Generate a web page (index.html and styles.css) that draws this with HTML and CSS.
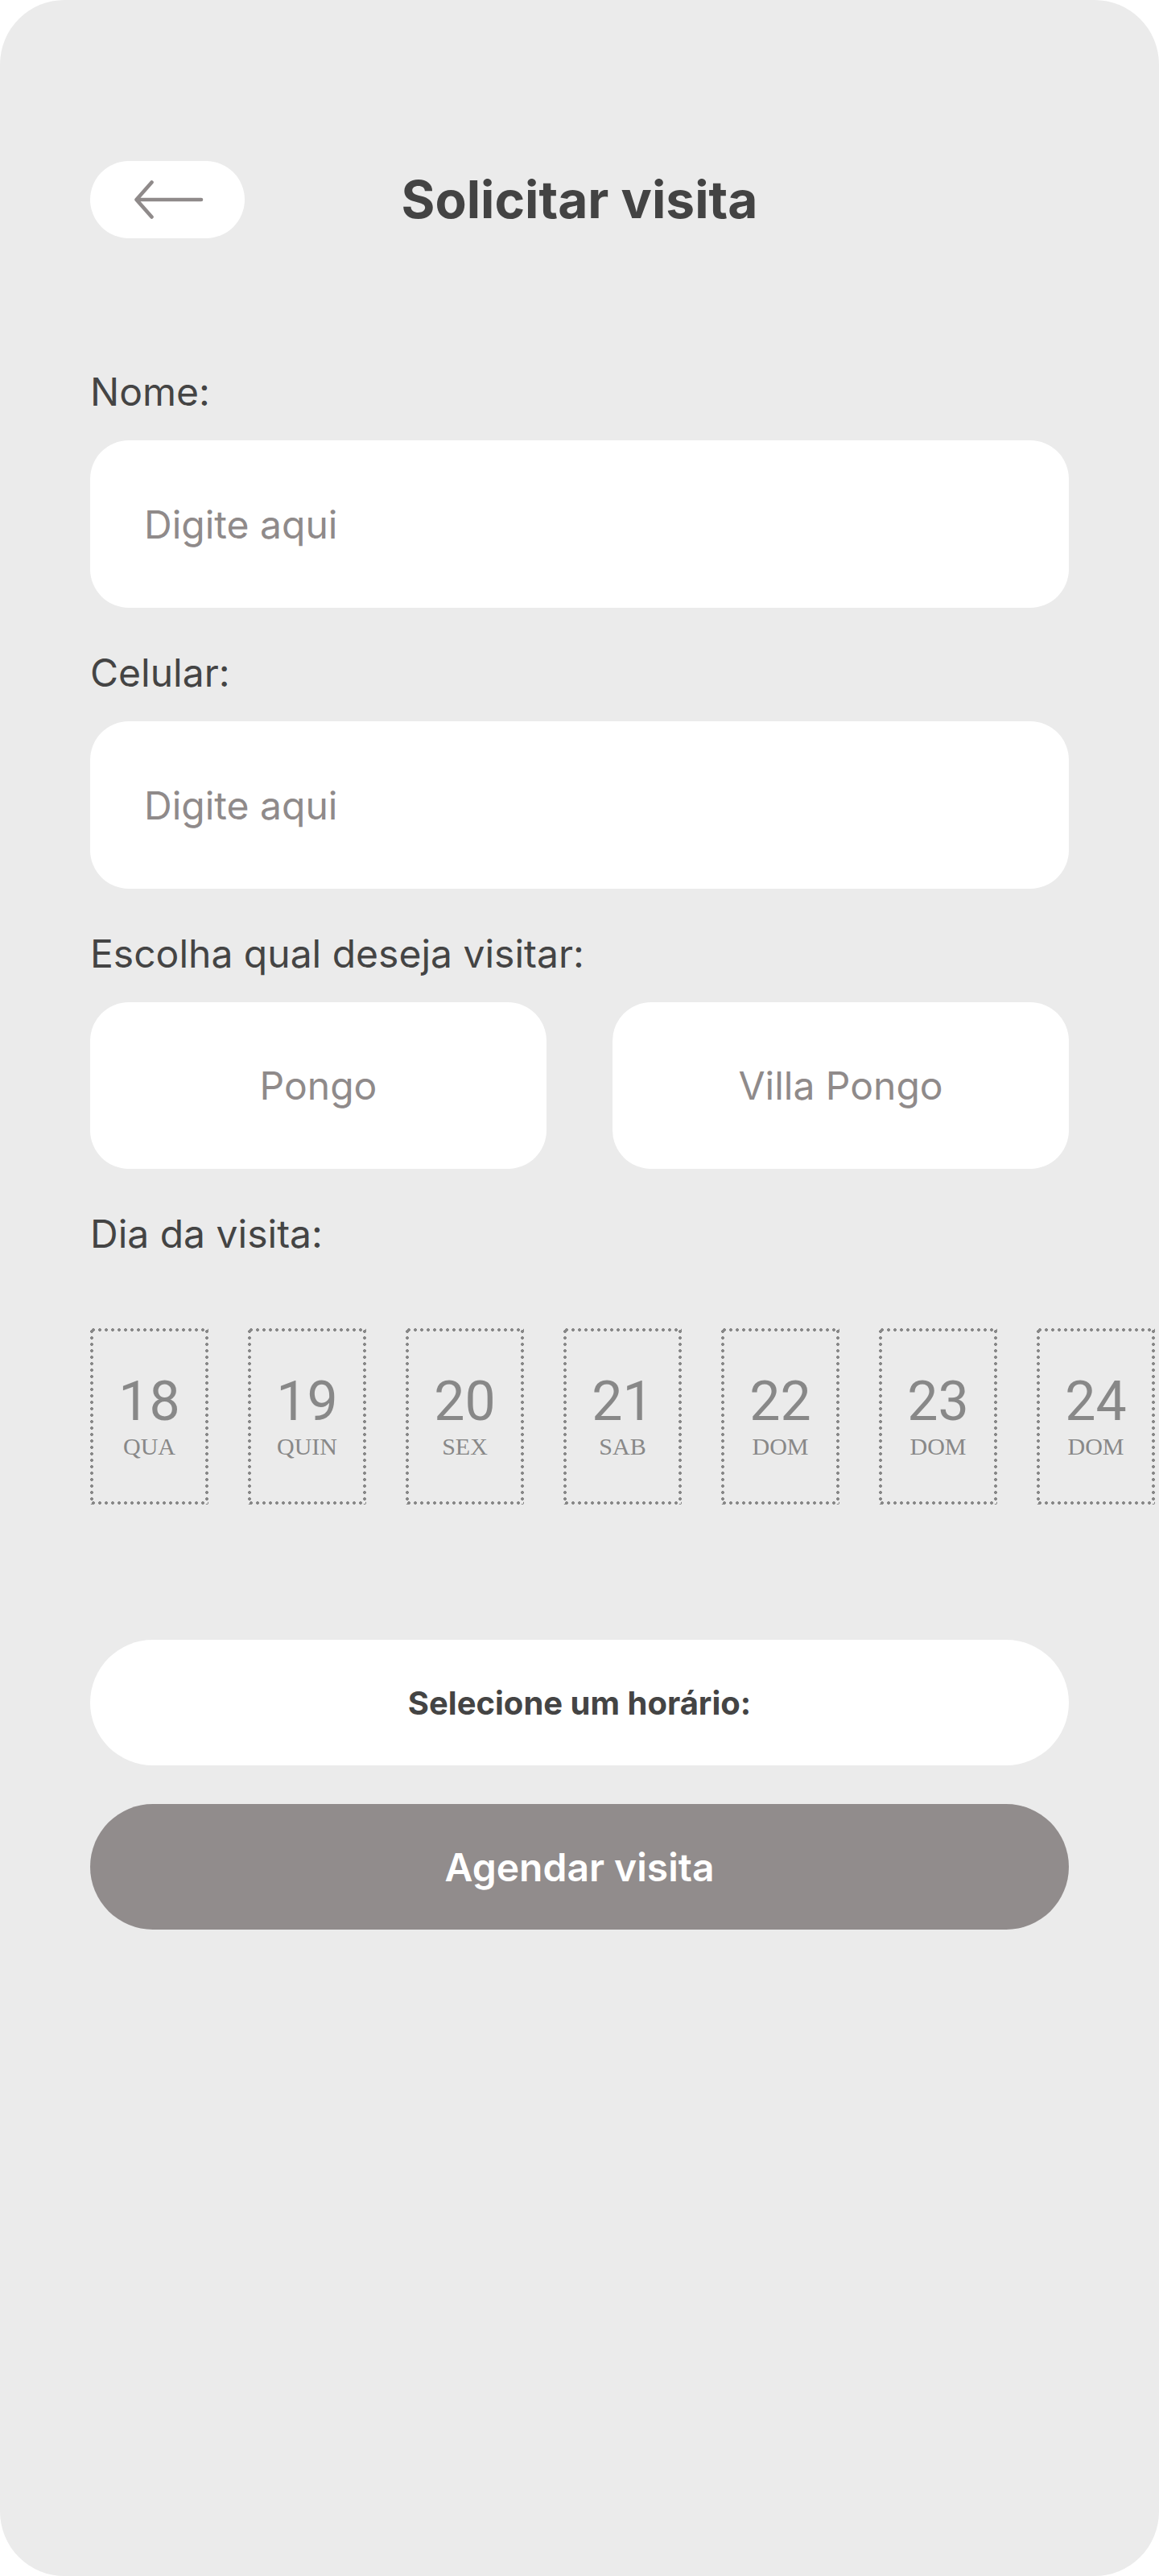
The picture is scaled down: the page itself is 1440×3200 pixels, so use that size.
FILE: index.html
```html
<!DOCTYPE html>
<html lang="pt-BR">
<head>
<meta charset="utf-8">
<title>Solicitar visita</title>
<link rel="stylesheet" href="styles.css">
</head>
<body>
<div class="screen">
  <header class="header">
    <button class="back" aria-label="Voltar">
      <svg width="192" height="96" viewBox="0 0 192 96" aria-hidden="true">
        <path d="M138 48 H58 M76.5 26.5 L57.5 48 L76.5 69.5" fill="none" stroke="#8f8a8a" stroke-width="4.6" stroke-linecap="round" stroke-linejoin="round"/>
      </svg>
    </button>
    <h1 class="title">Solicitar visita</h1>
  </header>

  <form class="form">
    <div class="field">
      <label class="label">Nome:</label>
      <div class="input">Digite aqui</div>
    </div>
    <div class="field">
      <label class="label">Celular:</label>
      <div class="input">Digite aqui</div>
    </div>
    <div class="field">
      <label class="label">Escolha qual deseja visitar:</label>
      <div class="choices">
        <div class="choice">Pongo</div>
        <div class="choice">Villa Pongo</div>
      </div>
    </div>
    <div class="field">
      <label class="label">Dia da visita:</label>
      <div class="days">
        <div class="day"><span class="num">18</span><span class="wd">QUA</span></div>
        <div class="day"><span class="num">19</span><span class="wd">QUIN</span></div>
        <div class="day"><span class="num">20</span><span class="wd">SEX</span></div>
        <div class="day"><span class="num">21</span><span class="wd">SAB</span></div>
        <div class="day"><span class="num">22</span><span class="wd">DOM</span></div>
        <div class="day"><span class="num">23</span><span class="wd">DOM</span></div>
        <div class="day"><span class="num">24</span><span class="wd">DOM</span></div>
      </div>
    </div>

    <div class="time">Selecione um horário:</div>
    <div class="submit">Agendar visita</div>
  </form>
</div>
</body>
</html>
```

FILE: styles.css
```css
* { box-sizing: border-box; }

html, body {
  margin: 0;
  padding: 0;
  background: #ffffff;
}

.screen {
  width: 1440px;
  height: 3200px;
  background: #ebebeb;
  border-radius: 80px;
  overflow: hidden;
  padding: 200px 112px 0 112px;
  font-family: "Inter", "Liberation Sans", sans-serif;
  color: #444444;
}

.header {
  display: grid;
  grid-template-columns: 1fr auto 1fr;
  align-items: center;
  height: 96px;
}

.back {
  justify-self: start;
  width: 192px;
  height: 96px;
  border: none;
  padding: 0;
  margin: 0;
  background: #ffffff;
  border-radius: 48px;
  display: block;
}

.back svg { display: block; }

.title {
  margin: 0;
  font-size: 64px;
  font-weight: 700;
  line-height: 96px;
  color: #434343;
  white-space: nowrap;
}

.form {
  display: flex;
  flex-direction: column;
  margin-top: 162px;
}

.field {
  display: flex;
  flex-direction: column;
  margin-bottom: 52px;
}

.label {
  font-size: 48px;
  line-height: 58px;
  font-weight: 400;
  color: #444444;
  margin-bottom: 31px;
}

.input {
  height: 208px;
  background: #ffffff;
  border-radius: 48px;
  padding-left: 67px;
  display: flex;
  align-items: center;
  font-size: 48px;
  color: #8f8a8a;
}

.choices {
  display: flex;
  gap: 82px;
}

.choice {
  flex: 1;
  height: 207px;
  background: #ffffff;
  border-radius: 48px;
  display: flex;
  align-items: center;
  justify-content: center;
  font-size: 48px;
  color: #8f8a8a;
}

.days {
  display: flex;
  gap: 49px;
  margin-top: 57px;
}

.day {
  flex: 0 0 147px;
  height: 219px;
  display: flex;
  flex-direction: column;
  align-items: center;
  padding-top: 57px;
  color: #888888;
  background:
    radial-gradient(circle, #878787 1.7px, transparent 2.2px) 0 0 / 8px 4px repeat-x,
    radial-gradient(circle, #878787 1.7px, transparent 2.2px) 0 100% / 8px 4px repeat-x,
    radial-gradient(circle, #878787 1.7px, transparent 2.2px) 0 0 / 4px 8px repeat-y,
    radial-gradient(circle, #878787 1.7px, transparent 2.2px) 100% 0 / 4px 8px repeat-y;
}

.num {
  font-family: "Roboto", "Liberation Sans", sans-serif;
  font-size: 68px;
  line-height: 68px;
  font-weight: 400;
}

.wd {
  font-family: "Liberation Serif", serif;
  font-size: 30px;
  line-height: 30px;
  margin-top: 7px;
}

.time {
  margin-top: 116px;
  height: 156px;
  border-radius: 78px;
  background: #ffffff;
  display: flex;
  align-items: center;
  justify-content: center;
  font-size: 40px;
  font-weight: 700;
  color: #444444;
}

.submit {
  margin-top: 48px;
  height: 156px;
  border-radius: 78px;
  background: #918c8c;
  display: flex;
  align-items: center;
  justify-content: center;
  font-size: 48px;
  font-weight: 600;
  color: #ffffff;
}
```
